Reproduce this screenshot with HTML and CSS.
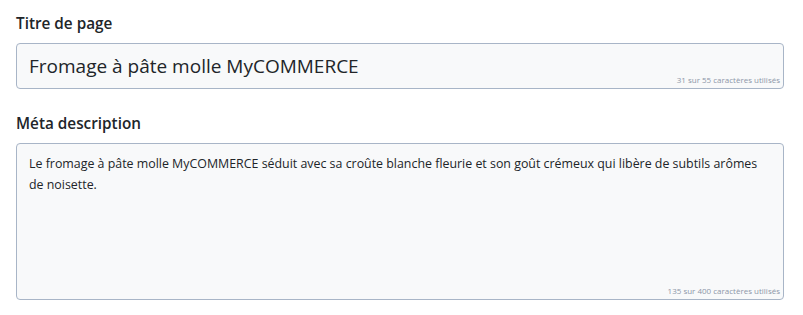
FILE: index.html
```html
<!DOCTYPE html>
<html lang="fr">
<head>
<meta charset="utf-8">
<title>SEO</title>
<link rel="stylesheet" href="styles.css">
</head>
<body>
<div class="form">
  <div class="field">
    <label class="label">Titre de page</label>
    <div class="box box-input">
      <div class="input-text">Fromage à pâte molle MyCOMMERCE</div>
      <div class="counter">31 sur 55 caractères utilisés</div>
    </div>
  </div>
  <div class="field">
    <label class="label">Méta description</label>
    <div class="box box-area">
      <div class="area-text">Le fromage à pâte molle MyCOMMERCE séduit avec sa croûte blanche fleurie et son goût crémeux qui libère de subtils arômes de noisette.</div>
      <div class="counter">135 sur 400 caractères utilisés</div>
    </div>
  </div>
</div>
</body>
</html>
```
FILE: styles.css
```css
html, body {
  margin: 0;
  padding: 0;
  background: #ffffff;
}
body {
  font-family: "Open Sans", "Noto Sans", sans-serif;
  color: #212529;
}
.form {
  display: flex;
  flex-direction: column;
  gap: 22px;
  padding: 11px 19px 0 16px;
}
.field {
  display: flex;
  flex-direction: column;
  gap: 8px;
}
.label {
  display: block;
  padding-left: 0;
  font-size: 15.3px;
  font-weight: 600;
  line-height: 24px;
  color: #212529;
}
.box {
  position: relative;
  box-sizing: border-box;
  background: #f8f9fa;
  border: 1px solid #a8b5c7;
  border-radius: 4px;
}
.box-input {
  height: 46px;
  padding: 8px 12px;
}
.input-text {
  font-size: 19px;
  line-height: 28px;
}
.box-area {
  height: 157px;
  padding: 9px 12px;
}
.area-text {
  font-size: 12.4px;
  line-height: 21px;
}
.counter {
  position: absolute;
  right: 3px;
  bottom: 3px;
  font-size: 8px;
  line-height: 10px;
  color: #8c96a8;
}
```
